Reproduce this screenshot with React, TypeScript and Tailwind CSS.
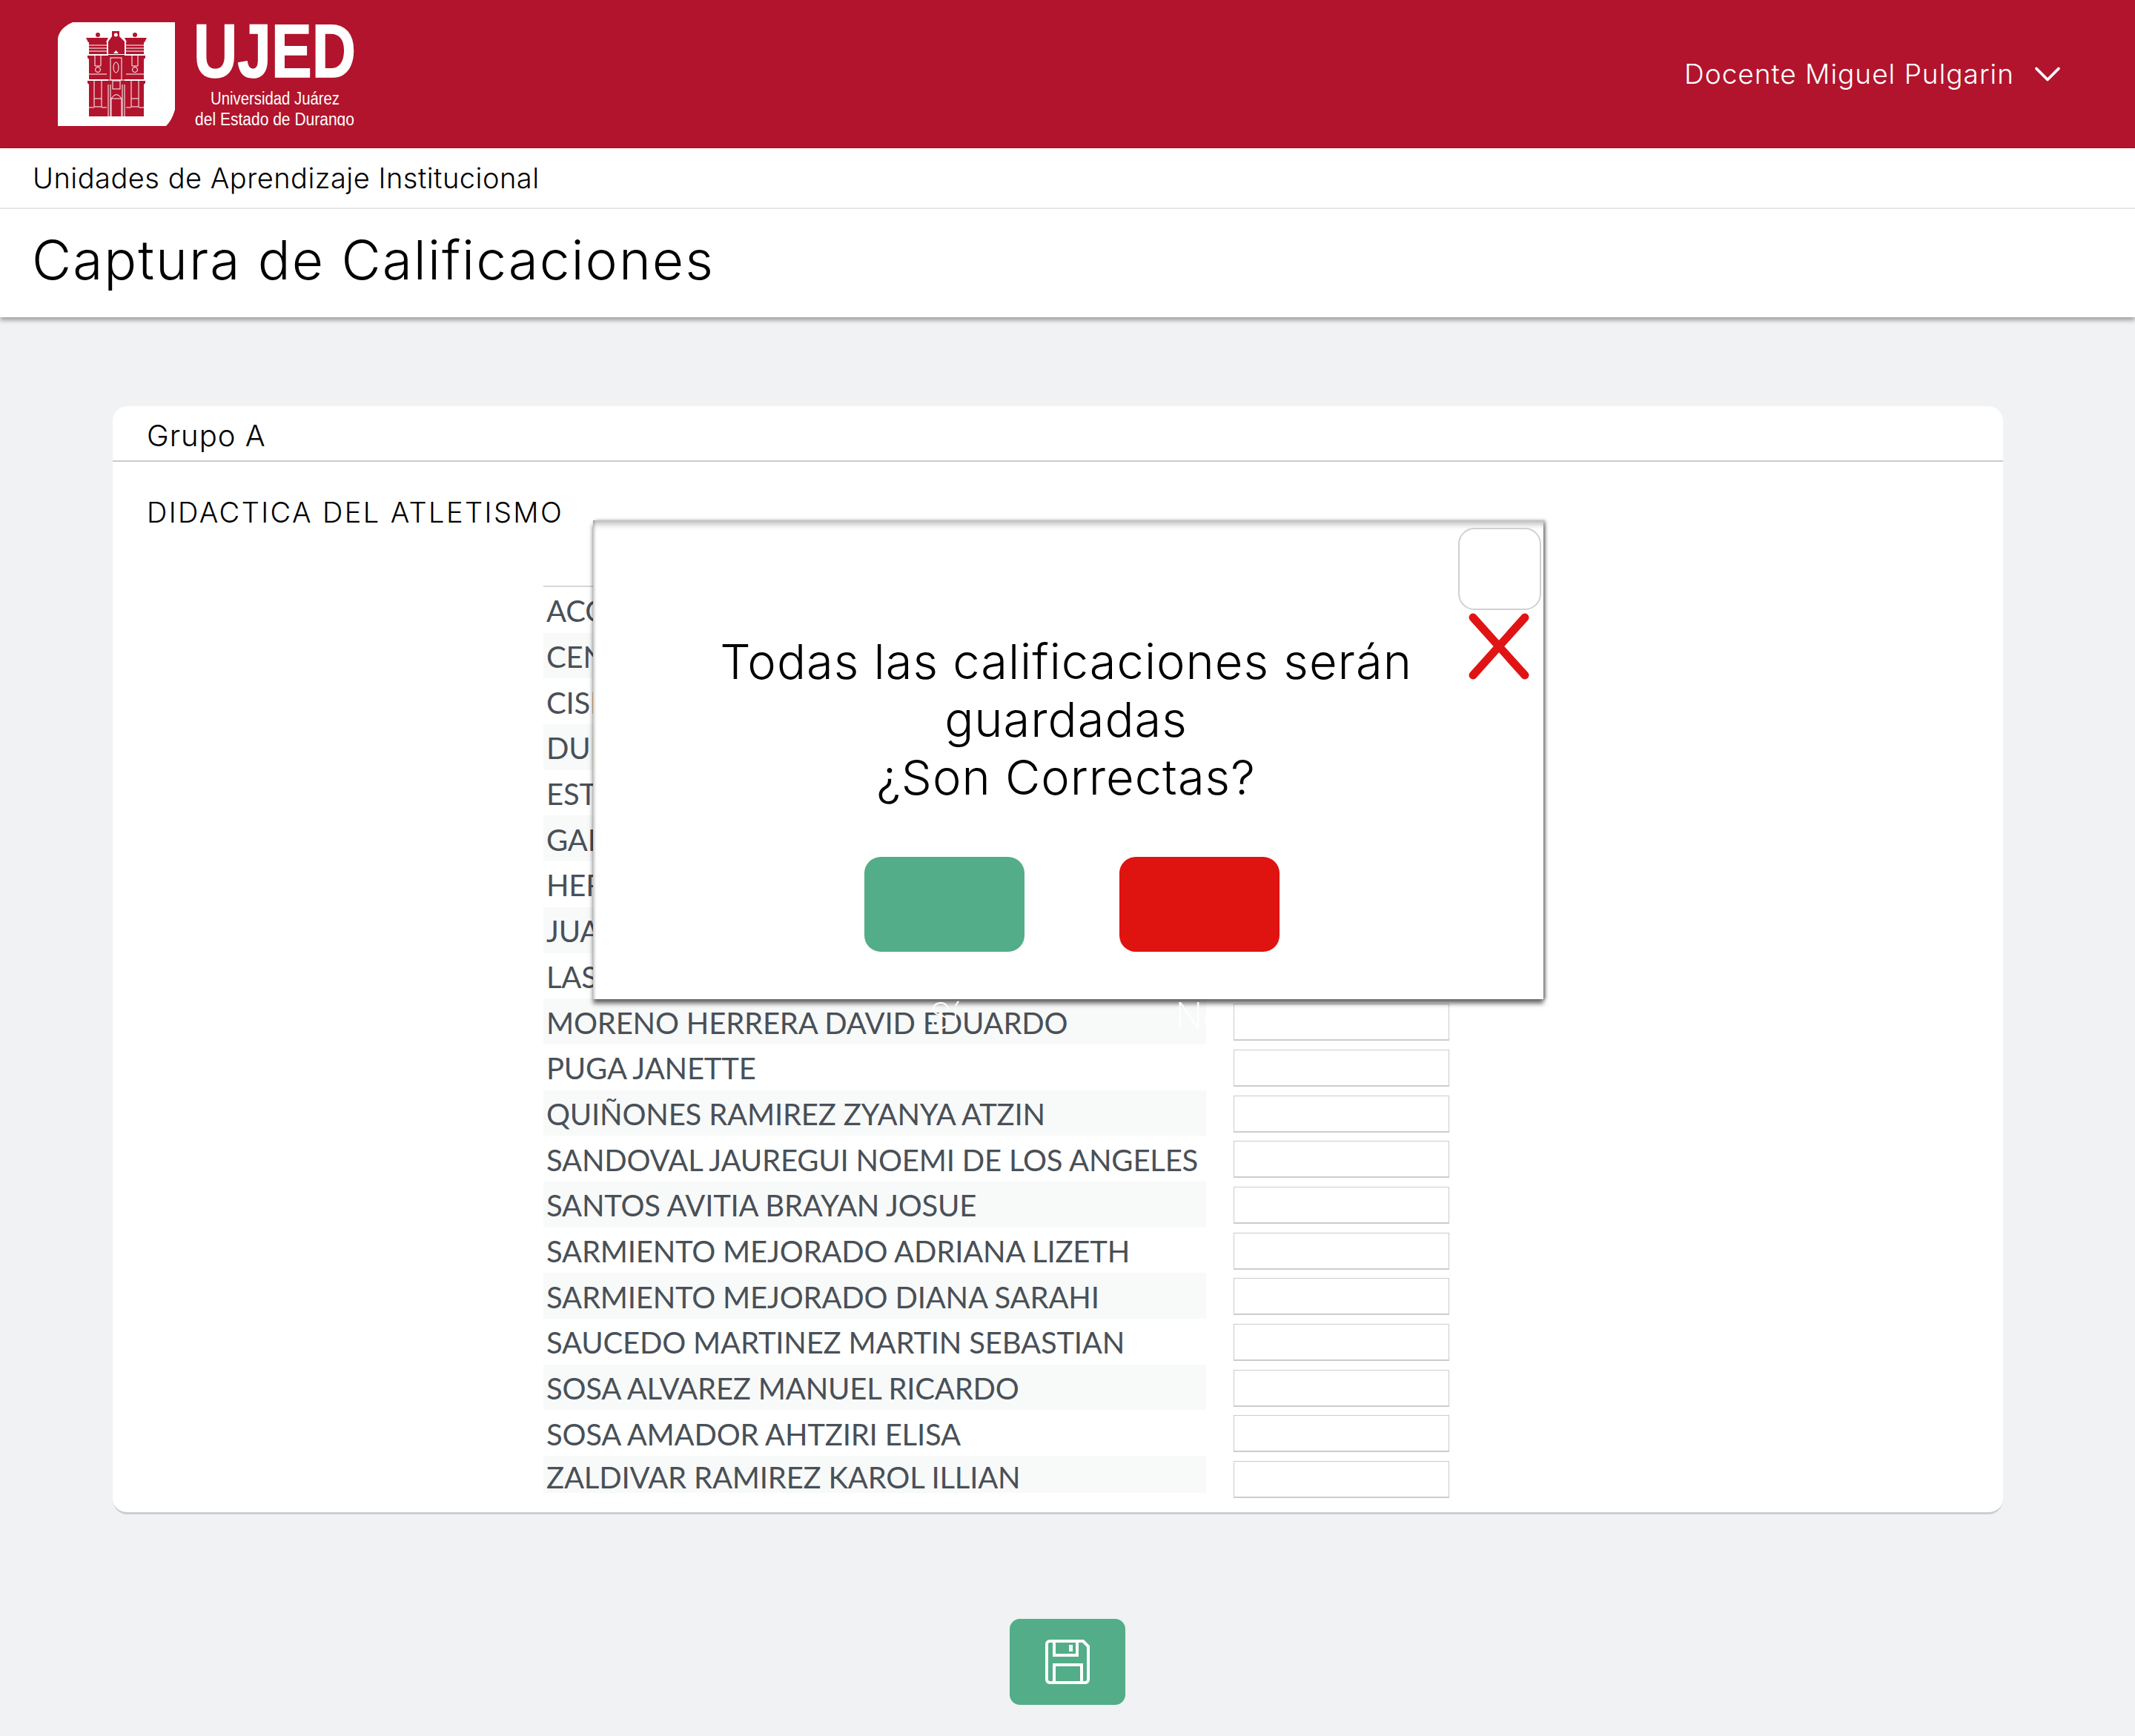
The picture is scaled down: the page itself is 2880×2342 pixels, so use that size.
import { ChevronDown } from "lucide-react"

const alumnos = [
  "ACOSTA",
  "CENICEROS",
  "CISNEROS",
  "DURAN",
  "ESTRADA",
  "GARCIA",
  "HERRERA",
  "JUAREZ",
  "LASTRA",
  "MORENO HERRERA DAVID EDUARDO",
  "PUGA JANETTE",
  "QUIÑONES RAMIREZ ZYANYA ATZIN",
  "SANDOVAL JAUREGUI NOEMI DE LOS ANGELES",
  "SANTOS AVITIA BRAYAN JOSUE",
  "SARMIENTO MEJORADO ADRIANA LIZETH",
  "SARMIENTO MEJORADO DIANA SARAHI",
  "SAUCEDO MARTINEZ MARTIN SEBASTIAN",
  "SOSA ALVAREZ MANUEL RICARDO",
  "SOSA AMADOR AHTZIRI ELISA",
  "ZALDIVAR RAMIREZ KAROL ILLIAN",
]

function Logo() {
  const red = "#b2142d"
  return (
    <svg width="400" height="140" viewBox="0 0 400 140" className="block">
      <path d="M20 0H158V118Q154 132 146 140H0V22Q2 8 20 0Z" fill="#fff" />
      {/* edificio */}
      <g fill={red}>
        <circle cx="54" cy="17" r="3" />
        <circle cx="104" cy="17" r="3" />
        <path d="M38 21H68L65 27H41Z" />
        <path d="M90 21H120L117 27H93Z" />
        <rect x="42" y="27" width="24" height="16" />
        <rect x="92" y="27" width="24" height="16" />
        <path d="M73 12H83V19L90 26V43H68V26L73 19Z" />
        <path d="M40 45H68V77H42V50L40 48Z" />
        <path d="M118 45H90V77H116V50L118 48Z" />
        <rect x="68" y="44" width="22" height="40" />
        <path d="M40 79H68V127H42V84L40 82Z" />
        <path d="M118 79H90V127H116V84L118 82Z" />
        <rect x="68" y="84" width="23" height="43" />
      </g>
      <g fill="none" stroke="#fff" strokeWidth="1">
        <path d="M42 31H66M42 35H66M42 39H66M92 31H116M92 35H116M92 39H116" />
        <path d="M50 45V59H58V45M100 45V59H108V45" />
        <circle cx="54" cy="64" r="3.5" />
        <circle cx="104" cy="64" r="3.5" />
        <path d="M42 70H66M92 70H116M40 78H118" />
        <rect x="71" y="48" width="15" height="30" />
        <ellipse cx="78.5" cy="61" rx="3.5" ry="7" />
        <path d="M68 84V127M90 84V127M71 84V127M87 84V127" />
        <rect x="74" y="79" width="10" height="11" />
        <path d="M49 79V103H59V79M99 79V103H109V79M49 103V114H59V103M99 103V114H109V103" />
        <path d="M42 115H49M59 115H66M92 115H99M109 115H116" />
        <path d="M72 127V103Q79 92 86 103V127M72 103H86" />
      </g>
      <path d="M75 42L78.5 38L82 42Z" fill="#fff" />
      <circle cx="78.3" cy="17" r="2.5" fill="#fff" />
      {/* letras */}
      <text x="183" y="74" fill="#fff" stroke="#fff" strokeWidth="1.5" fontFamily="Liberation Sans" fontWeight="700" fontSize="102" textLength="219" lengthAdjust="spacingAndGlyphs">UJED</text>
      <text x="206" y="111" fill="#fff" fontFamily="Liberation Sans" fontSize="23" textLength="174" lengthAdjust="spacingAndGlyphs">Universidad Juárez</text>
      <text x="185" y="139" fill="#fff" fontFamily="Liberation Sans" fontSize="23" textLength="215" lengthAdjust="spacingAndGlyphs">del Estado de Durango</text>
    </svg>
  )
}

function SaveIcon() {
  return (
    <svg width="60" height="60" viewBox="0 0 60 60" fill="none" stroke="#fff" strokeWidth="4">
      <path d="M6 2H51L58 9V54A4 4 0 0 1 54 58H6A4 4 0 0 1 2 54V6A4 4 0 0 1 6 2Z" />
      <path d="M12 2V21H43V2" />
      <path d="M12 58V34H49V58" />
      <rect x="32" y="7" width="5" height="9" fill="#fff" stroke="none" />
    </svg>
  )
}

export default function App() {
  return (
    <div className="min-h-[2342px] bg-[#f0f2f4] font-['Inter',sans-serif] relative">
      <header className="h-[200px] bg-[#b2142d] flex items-center justify-between pl-[78px] pr-[88px]">
        <Logo />
        <div className="flex items-center gap-[15px] text-white text-[37px] tracking-[1px] font-light">
          <span>Docente Miguel Pulgarin</span>
          <ChevronDown size={60} strokeWidth={1.5} />
        </div>
      </header>

      <div className="bg-white shadow-[0_4px_6px_rgba(0,0,0,0.35)]">
        <div className="h-[82px] border-b-2 border-[#e6e6e6] pl-[44px] flex items-center text-[38px] tracking-[0.5px] font-light text-black">
          Unidades de Aprendizaje Institucional
        </div>
        <h1 className="h-[146px] pl-[43px] pb-[8px] flex items-center text-[73px] tracking-[2px] font-light text-black">
          Captura de Calificaciones
        </h1>
      </div>

      <section className="mt-[120px] ml-[152px] w-[2550px] h-[1495px] bg-white rounded-[20px] border-b-[3px] border-[#ccced2]">
        <div className="h-[75px] pl-[46px] pt-[6px] border-b-2 border-[#cccccc] flex items-center text-[40px] tracking-[1px] font-light text-black">
          Grupo A
        </div>
        <div className="pt-[46px] pl-[46px] text-[38px] tracking-[2.4px] leading-[44px] font-light text-black">
          DIDACTICA DEL ATLETISMO
        </div>
        <div className="mt-[77px] ml-[581px] w-[1222px]">
          <div className="w-[894px] h-0 border-t-2 border-[#d5d8dc]" />
          {alumnos.map((nombre, i) => (
            <div key={nombre} className="h-[61.7px] flex gap-[37px] font-['Lato',sans-serif] text-[40px] tracking-[-0.18px] text-[#495057]">
              <div className={`w-[894px] pl-[4px] flex items-center overflow-hidden ${i === alumnos.length - 1 ? "h-[50px] pt-[7px]" : "h-full pt-[3px]"} ${i % 2 === 1 ? "bg-[#f8f9f9]" : ""}`}>
                {nombre}
              </div>
              <input className="mt-[7px] w-[291px] h-[50px] bg-white border border-[#cccccc] border-b-2" />
            </div>
          ))}
        </div>
      </section>

      <div className="mt-[141px] flex justify-center">
        <button className="w-[156px] h-[116px] rounded-[14px] bg-[#52ad88] flex items-center justify-center">
          <SaveIcon />
        </button>
      </div>

      {/* modal de confirmación */}
      <div className="absolute left-[800px] top-[702px] w-[1282px] h-[646px] bg-white shadow-[0_6px_6px_rgba(0,0,0,0.55),3px_0_4px_rgba(0,0,0,0.35),inset_0_10px_8px_-5px_rgba(0,0,0,0.28),inset_4px_0_4px_-3px_rgba(0,0,0,0.3)]">
        <button className="absolute left-[1167px] top-[10px] w-[112px] h-[111px] rounded-[22px] border-2 border-[#d0d0d0] bg-white" />
        <svg className="absolute left-[1180px] top-[124px]" width="84" height="92" viewBox="0 0 84 92" fill="none" stroke="#e01414" strokeWidth="11" strokeLinecap="round">
          <path d="M7 7L77 85M77 7L7 85" />
        </svg>
        <p className="pt-[152px] pr-[6px] text-center text-[65px] tracking-[1px] leading-[78px] font-light text-black">
          Todas las calificaciones serán
          <br />
          guardadas
          <br />
          ¿Son Correctas?
        </p>
        <div className="mt-[68px] pl-[366px] flex gap-[128px]">
          <button className="relative w-[216px] h-[128px] rounded-[22px] bg-[#52ad88]">
            <span className="absolute left-0 right-0 top-[178px] text-center text-[48px] font-extralight text-white">Sí</span>
          </button>
          <button className="relative w-[216px] h-[128px] rounded-[22px] bg-[#df1310]">
            <span className="absolute left-0 right-0 top-[178px] text-center text-[48px] font-extralight text-white">No</span>
          </button>
        </div>
      </div>
    </div>
  )
}
